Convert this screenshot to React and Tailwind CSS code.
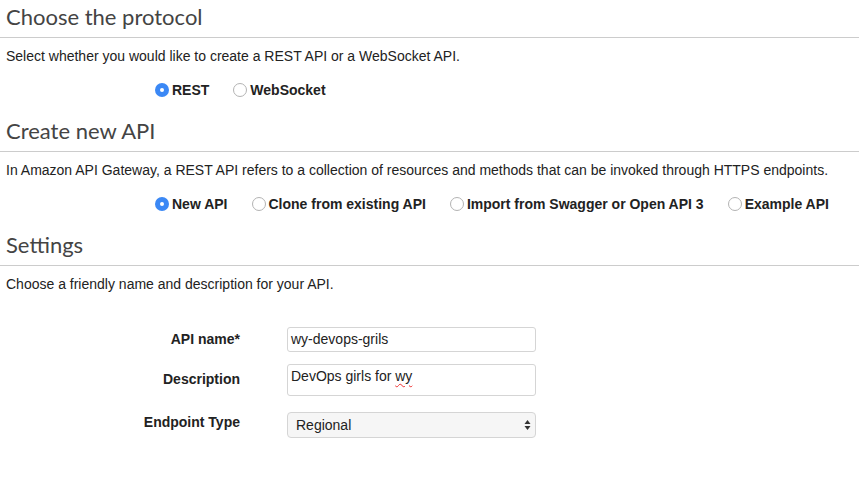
import React from "react";

const Radio = ({ checked, label }) => (
  <label className="flex items-center mr-[24px]">
    {checked ? (
      <span className="w-[14px] h-[14px] rounded-full bg-[#3b88f5] flex items-center justify-center">
        <span className="w-[4px] h-[4px] rounded-full bg-white"></span>
      </span>
    ) : (
      <span className="w-[14px] h-[14px] rounded-full border border-[#b3b3b3] bg-white"></span>
    )}
    <span className="ml-[3px] font-bold text-[14px] text-[#222]">{label}</span>
  </label>
);

const Heading = ({ children }) => (
  <div className="border-b border-[#cccccc] pl-[6px] h-[38px] flex items-end pb-[6px]">
    <h2 className="text-[22px] leading-[28px] text-[#444] font-['Lato',sans-serif]">{children}</h2>
  </div>
);

export default function App() {
  return (
    <div className="w-[859px] h-[481px] bg-white font-['Liberation_Sans',Arial,sans-serif] text-[14px] text-[#222]">
      <Heading>Choose the protocol</Heading>
      <p className="pl-[6px] mt-[10px] leading-[16px]">Select whether you would like to create a REST API or a WebSocket API.</p>
      <div className="flex pl-[155px] mt-[18px] h-[16px] items-center">
        <Radio checked label="REST" />
        <Radio label="WebSocket" />
      </div>
      <div className="mt-[16px]">
        <Heading>Create new API</Heading>
      </div>
      <p className="pl-[6px] mt-[10px] leading-[16px]">In Amazon API Gateway, a REST API refers to a collection of resources and methods that can be invoked through HTTPS endpoints.</p>
      <div className="flex pl-[155px] mt-[18px] h-[16px] items-center">
        <Radio checked label="New API" />
        <Radio label="Clone from existing API" />
        <Radio label="Import from Swagger or Open API 3" />
        <Radio label="Example API" />
      </div>
      <div className="mt-[16px]">
        <Heading>Settings</Heading>
      </div>
      <p className="pl-[6px] mt-[10px] leading-[16px]">Choose a friendly name and description for your API.</p>
      <div className="mt-[35px] flex flex-col gap-[12px]">
        <div className="flex items-center">
          <div className="w-[240px] text-right font-bold text-[14px]">API name*</div>
          <div className="ml-[47px] w-[249px] h-[25px] border border-[#d5d5d5] rounded-[3px] px-[3px] flex items-center text-[14px] text-[#222]">wy-devops-grils</div>
        </div>
        <div className="flex items-start">
          <div className="w-[240px] text-right font-bold text-[14px] pt-[5px]">Description</div>
          <div className="ml-[47px] w-[249px] h-[32px] border border-[#d5d5d5] rounded-[3px] px-[3px] pt-[3px] text-[14px] leading-[17px] text-[#222]">
            DevOps girls for <span className="underline decoration-wavy decoration-[#e33] decoration-1 underline-offset-2">wy</span>
          </div>
        </div>
        <div className="flex items-center mt-[4px]">
          <div className="w-[240px] text-right font-bold text-[14px] -mt-[5px]">Endpoint Type</div>
          <div className="ml-[47px] w-[249px] h-[26px] border border-[#d5d5d5] rounded-[4px] bg-[#f6f6f6] pl-[8px] pr-[4px] flex items-center justify-between text-[14px] text-[#222]">
            <span>Regional</span>
            <svg width="7" height="12" viewBox="0 0 7 12">
              <path d="M3.5 1 L6.5 5 L0.5 5 Z" fill="#333" />
              <path d="M3.5 11 L6.5 7 L0.5 7 Z" fill="#333" />
            </svg>
          </div>
        </div>
      </div>
    </div>
  );
}
